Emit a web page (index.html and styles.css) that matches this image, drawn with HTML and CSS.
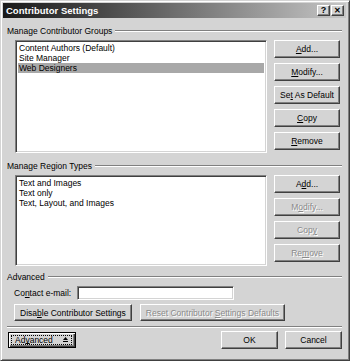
FILE: index.html
```html
<!DOCTYPE html>
<html lang="en">

<head>
    <meta charset="UTF-8">
    <title>Contributor Settings</title>
    <link rel="stylesheet" href="styles.css">
</head>

<body>
    <div class="window">
        <!-- Title bar -->
        <div class="titlebar">
            <span class="title">Contributor Settings</span>
            <div class="title-buttons">
                <span class="tbtn">?</span>
                <span class="tbtn close">&#x2715;</span>
            </div>
        </div>

        <div class="content">
            <!-- Groups -->
            <div class="section-title"><span>Manage Contributor Groups</span><div class="rule"></div></div>
            <div class="section-body">
                <ul class="listbox groups">
                    <li>Content Authors (Default)</li>
                    <li>Site Manager</li>
                    <li class="selected">Web Designers</li>
                </ul>
                <div class="btn-column">
                    <button class="btn"><u>A</u>dd...</button>
                    <button class="btn"><u>M</u>odify...</button>
                    <button class="btn">Se<u>t</u> As Default</button>
                    <button class="btn"><u>C</u>opy</button>
                    <button class="btn"><u>R</u>emove</button>
                </div>
            </div>

            <!-- Regions -->
            <div class="section-title regions-title"><span>Manage Region Types</span><div class="rule"></div></div>
            <div class="section-body">
                <ul class="listbox regions">
                    <li>Text and Images</li>
                    <li>Text only</li>
                    <li>Text, Layout, and Images</li>
                </ul>
                <div class="btn-column">
                    <button class="btn">A<u>d</u>d...</button>
                    <button class="btn" disabled>M<u>o</u>dify...</button>
                    <button class="btn" disabled>Cop<u>y</u></button>
                    <button class="btn" disabled>Re<u>m</u>ove</button>
                </div>
            </div>

            <!-- Advanced -->
            <div class="section-title advanced-title"><span>Advanced</span><div class="rule"></div></div>
            <div class="advanced">
                <div class="email-row">
                    <label>Co<u>n</u>tact e-mail:</label>
                    <div class="textbox"></div>
                </div>
                <div class="adv-buttons">
                    <button class="btn wide">Disa<u>b</u>le Contributor Settings</button>
                    <button class="btn wide" disabled>Reset Contributor <u>S</u>ettings Defaults</button>
                </div>
            </div>

            <div class="rule bottom-rule"></div>

            <!-- Footer buttons -->
            <div class="footer">
                <button class="btn default">
                    <span class="focus">
                        <span>Ad<u>v</u>anced</span>
                        <svg class="collapse" width="5" height="6" viewBox="0 0 5 6">
                            <path d="M2.5 0 L5 3 L0 3 Z" fill="#000"/>
                            <rect x="0" y="4" width="5" height="1" fill="#000"/>
                        </svg>
                    </span>
                </button>
                <div class="footer-right">
                    <button class="btn footer-btn">OK</button>
                    <button class="btn footer-btn">Cancel</button>
                </div>
            </div>
        </div>
    </div>
</body>

</html>
```

FILE: styles.css
```css
html, body {
    margin: 0;
    padding: 0;
}

body {
    font-family: 'Liberation Sans', Arial, sans-serif;
    font-size: 8.5px;
    color: #000;
    background: #d4d4d4;
}

.window {
    width: 350px;
    height: 361px;
    box-sizing: border-box;
    background: #d4d4d4;
    border: 1px solid;
    border-color: #d4d4d4 #404040 #404040 #d4d4d4;
    box-shadow: inset 1px 1px #fff, inset -1px -1px #808080;
    padding: 2px 3px 3px 2px;
}

.titlebar {
    height: 15px;
    background: linear-gradient(to right, #1a1a1a, #4a4a4a 30%, #c6c6c6);
    display: flex;
    align-items: center;
    justify-content: space-between;
    padding: 0 2px 0 3px;
}

.title {
    color: #fff;
    font-weight: bold;
    font-size: 9.5px;
}

.title-buttons {
    display: flex;
    gap: 1px;
}

.tbtn {
    width: 11px;
    height: 9px;
    background: #d4d4d4;
    border: 1px solid;
    border-color: #fff #404040 #404040 #fff;
    box-shadow: inset -1px -1px #808080;
    font-size: 9px;
    font-weight: bold;
    line-height: 9px;
    text-align: center;
}

.tbtn.close {
    font-size: 8px;
}

.content {
    padding: 0 4px 0 4px;
}

.section-title {
    display: flex;
    align-items: center;
    margin-top: 7px;
    height: 11px;
}

.section-title span {
    padding-right: 3px;
}

.rule {
    flex: 1;
    height: 0;
    border-top: 1px solid #808080;
    border-bottom: 1px solid #fff;
}

.regions-title {
    margin-top: 7px;
}

.advanced-title {
    margin-top: 5px;
}

.section-body {
    display: flex;
    padding-left: 8px;
    margin-top: 4px;
}

.listbox {
    list-style: none;
    margin: 0;
    padding: 2px 0 0 2px;
    width: 252px;
    box-sizing: border-box;
    background: #fff;
    border: 1px solid;
    border-color: #808080 #fff #fff #808080;
    box-shadow: inset 1px 1px #404040, inset -1px -1px #d4d4d4;
}

.listbox li {
    height: 10px;
    line-height: 10px;
    padding-left: 1px;
    margin-right: 2px;
}

.listbox li.selected {
    background: #a8a8a8;
}

.groups {
    height: 113px;
}

.regions {
    height: 91px;
}

.btn-column {
    display: flex;
    flex-direction: column;
    gap: 5px;
    margin-left: 7px;
}

.btn {
    font-family: inherit;
    font-size: 8.5px;
    color: #000;
    background: #d4d4d4;
    border: 1px solid;
    border-color: #fff #404040 #404040 #fff;
    box-shadow: inset -1px -1px #808080;
    border-radius: 0;
    padding: 0;
    margin: 0;
    box-sizing: border-box;
    width: 66px;
    height: 18px;
}

.btn:disabled {
    color: #8a8a8a;
    text-shadow: 1px 1px #fff;
}

.advanced {
    padding-left: 7px;
}

.email-row {
    display: flex;
    align-items: center;
    margin-top: 4px;
}

.email-row label {
    width: 63px;
}

.textbox {
    width: 157px;
    height: 14px;
    box-sizing: border-box;
    background: #fff;
    border: 1px solid;
    border-color: #808080 #fff #fff #808080;
    box-shadow: inset 1px 1px #404040, inset -1px -1px #d4d4d4;
}

.adv-buttons {
    display: flex;
    gap: 8px;
    margin-top: 4px;
}

.btn.wide {
    width: auto;
    height: 17px;
    padding: 0 5px;
}

.bottom-rule {
    flex: none;
    margin-top: 5px;
}

.footer {
    display: flex;
    justify-content: space-between;
    align-items: center;
    margin-top: 3px;
}

.footer-right {
    display: flex;
    gap: 7px;
}

.btn.footer-btn {
    width: 57px;
    height: 18px;
}

.btn.default {
    width: 68px;
    height: 16px;
    border: 1px solid #000;
    box-shadow: inset 1px 1px #fff, inset -1px -1px #404040, inset -2px -2px #808080;
    margin-left: 1px;
    padding: 2px 3px 2px 2px;
    display: flex;
}

.focus {
    flex: 1;
    display: flex;
    align-items: center;
    gap: 10px;
    border: 1px dotted #000;
    padding-left: 3px;
    line-height: 8px;
}

.focus u {
    text-underline-offset: 0;
}

.collapse {
    display: block;
}
```
